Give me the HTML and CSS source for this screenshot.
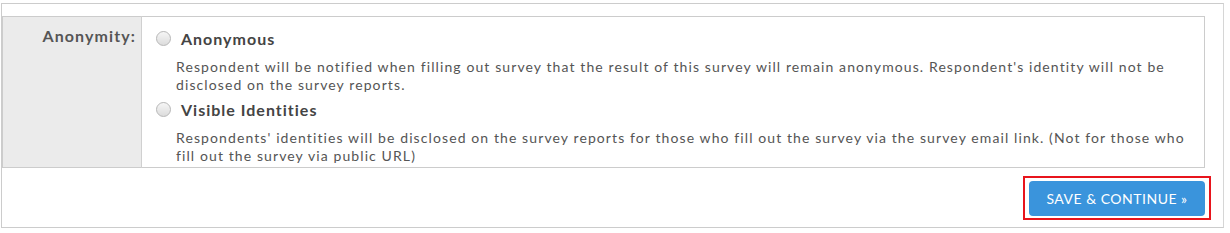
FILE: index.html
```html
<!DOCTYPE html>
<html>
<head>
  <title>Survey Settings</title>
  <link rel="stylesheet" href="styles.css">
</head>
<body>
  <div class="panel">
    <table class="form-table">
      <tr>
        <th>Anonymity:</th>
        <td>
          <!-- Anonymous option -->
          <label class="option">
            <input type="radio" name="anonymity" value="anonymous">
            <span class="option-title">Anonymous</span>
          </label>
          <p class="option-desc">Respondent will be notified when filling out survey that the result of this survey will remain anonymous. Respondent's identity will not be disclosed on the survey reports.</p>

          <!-- Visible option -->
          <label class="option">
            <input type="radio" name="anonymity" value="visible">
            <span class="option-title">Visible Identities</span>
          </label>
          <p class="option-desc">Respondents' identities will be disclosed on the survey reports for those who fill out the survey via the survey email link. (Not for those who fill out the survey via public URL)</p>
        </td>
      </tr>
    </table>

    <div class="actions">
      <span class="highlight"><button class="btn-save">SAVE &amp; CONTINUE &raquo;</button></span>
    </div>
  </div>
</body>
</html>
```

FILE: styles.css
```css
body { margin: 0; background: #fff; font-family: Lato, "Open Sans", sans-serif; color: #555; }

.panel {
  box-sizing: border-box; width: 1223px; height: 225px;
  margin: 3px 0 0 1px; padding: 12px 17px 0 0;
  border: 1px solid #ccc; border-right-color: #d6d6d6;
}

.form-table { width: 1203px; border-collapse: collapse; border: 1px solid #ccc; }
.form-table th {
  width: 133px; padding: 9px 5px 0 0; vertical-align: top; text-align: right;
  background: #ebebeb; border-right: 1px solid #d0d0d0;
  font-size: 16px; font-weight: bold; color: #555; letter-spacing: 1.1px;
}
.form-table td { padding: 10px 18px 2px 14px; vertical-align: top; }

.option { display: flex; align-items: center; height: 22px; cursor: pointer; }
.option input {
  -webkit-appearance: none; appearance: none;
  width: 15px; height: 15px; margin: 0 10px 0 0; border-radius: 50%;
  border: 1px solid #b8b8b8; background: linear-gradient(#f6f6f6, #dcdcdc);
}
.option-title { font-size: 16px; font-weight: bold; color: #444; letter-spacing: 1px; }
.option-desc { margin: 9px 0 4px 20px; font-size: 14px; line-height: 18px; letter-spacing: 1.1px; }
.option-desc:last-child { margin-bottom: 0; }

.actions { display: flex; justify-content: flex-end; padding-top: 8px; }
.highlight { border: 2px solid #e8141c; padding: 3px 4px 2px 4px; margin-right: -5px; }
.btn-save {
  display: block; width: 176px; height: 35px; border: none; border-radius: 4px;
  background: #3a94dc; color: #fff; font-family: Lato, sans-serif; font-size: 14px;
  letter-spacing: 0.5px; cursor: pointer;
}
```
